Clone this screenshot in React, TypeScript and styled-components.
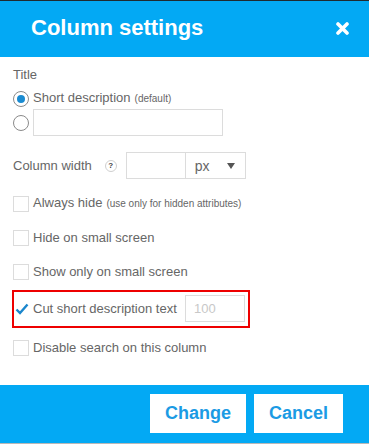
import React from "react";
import styled, { createGlobalStyle } from "styled-components";

const Global = createGlobalStyle`
  html, body { margin: 0; padding: 0; background: #fff; }
  body { font-family: "Liberation Sans", Arial, sans-serif; }
  * { box-sizing: border-box; }
`;

const Modal = styled.div`
  width: 369px;
  height: 444px;
  display: flex;
  flex-direction: column;
  border-top: 1px solid #1f2a30;
  border-bottom: 1px solid #b8b8b8;
  background: #fff;
`;

const Header = styled.div`
  height: 56px;
  flex: none;
  background: #03a9f4;
  display: flex;
  align-items: center;
  justify-content: space-between;
  padding: 0 20px 2px 31px;
`;

const Title = styled.h1`
  margin: 0;
  font-size: 22px;
  font-weight: bold;
  color: #fff;
  line-height: normal;
`;

const CloseBtn = styled.button`
  border: 0;
  background: none;
  padding: 0;
  width: 13px;
  height: 13px;
  display: flex;
  cursor: pointer;
`;

const Body = styled.div`
  flex: 1;
  padding: 10px 13px 0 13px;
  display: flex;
  flex-direction: column;
  color: #666;
  font-size: 13px;
  line-height: 16px;
`;

const Label = styled.div`
  line-height: 15px;
`;

const Row = styled.div<{ $mt: number; $gap?: number }>`
  display: flex;
  align-items: center;
  margin-top: ${(p) => p.$mt}px;
  gap: ${(p) => (p.$gap ?? 4)}px;
  min-height: 16px;
`;

const Radio = styled.span<{ $checked?: boolean }>`
  width: 16px;
  height: 16px;
  flex: none;
  border-radius: 50%;
  border: 1px solid #8a8a8a;
  background: #fff;
  display: flex;
  align-items: center;
  justify-content: center;
  &::after {
    content: "";
    display: ${(p) => (p.$checked ? "block" : "none")};
    width: 8px;
    height: 8px;
    border-radius: 50%;
    background: #1a8bd1;
  }
`;

const Small = styled.span`
  font-size: 10px;
  margin-left: 4px;
`;

const TextInput = styled.input<{ $w: number }>`
  width: ${(p) => p.$w}px;
  height: 27px;
  border: 1px solid #dcdcdc;
  font-family: inherit;
  font-size: 13px;
  color: #666;
  padding: 0 8px;
  outline: none;
  background: #fff;
  &::placeholder { color: #c8c8c8; }
`;

const Help = styled.span`
  width: 12px;
  height: 12px;
  border-radius: 50%;
  border: 1px solid #cfcfcf;
  display: flex;
  align-items: center;
  justify-content: center;
  font-size: 8px;
  font-weight: bold;
  color: #444;
  margin: 0 9px 0 13px;
  line-height: 1;
`;

const Select = styled.div`
  width: 60px;
  height: 27px;
  border: 1px solid #dcdcdc;
  border-left: 0;
  display: flex;
  align-items: center;
  justify-content: space-between;
  padding: 0 10px 0 9px;
  font-size: 14px;
  color: #666;
`;

const Arrow = styled.span`
  width: 0;
  height: 0;
  border-left: 4px solid transparent;
  border-right: 4px solid transparent;
  border-top: 6px solid #555;
`;

const Check = styled.span<{ $checked?: boolean }>`
  width: 16px;
  height: 16px;
  flex: none;
  border: ${(p) => (p.$checked ? "0" : "1px solid #dcdcdc")};
  background: #fff;
  display: flex;
  align-items: center;
  justify-content: center;
`;

const Highlight = styled.div`
  margin: 10px 0 0 -1px;
  width: 238px;
  border: 2px solid #ee0000;
  padding: 3px 3px 4px 0;
  display: flex;
  align-items: center;
  gap: 3px;
`;

const Spacer = styled.span`
  flex: 1;
`;

const Footer = styled.div`
  height: 58px;
  flex: none;
  background: #03a9f4;
  display: flex;
  justify-content: flex-end;
  align-items: flex-start;
  gap: 8px;
  padding: 9px 26px 0 0;
`;

const Button = styled.button`
  height: 39px;
  padding: 0 15px;
  border: 0;
  background: #fff;
  color: #1b9be4;
  font-family: "Liberation Sans", Arial, sans-serif;
  font-weight: bold;
  font-size: 18px;
  cursor: pointer;
`;

const CheckRow = ({ label, note, mt }: { label: string; note?: string; mt: number }) => (
  <Row $mt={mt}>
    <Check />
    <span>
      {label}
      {note && <Small>{note}</Small>}
    </span>
  </Row>
);

export default function App() {
  return (
    <>
      <Global />
      <Modal>
        <Header>
          <Title>Column settings</Title>
          <CloseBtn aria-label="close">
            <svg width="13" height="13" viewBox="0 0 13 13">
              <path d="M2 2 L11 11 M11 2 L2 11" stroke="#fff" strokeWidth="3.6" strokeLinecap="round" />
            </svg>
          </CloseBtn>
        </Header>
        <Body>
          <Label>Title</Label>
          <Row $mt={8}>
            <Radio $checked />
            <span>
              Short description<Small>(default)</Small>
            </span>
          </Row>
          <Row $mt={2}>
            <Radio />
            <TextInput $w={190} />
          </Row>
          <Row $mt={16} $gap={0}>
            <span>Column width</span>
            <Help>?</Help>
            <TextInput $w={60} />
            <Select>
              <span>px</span>
              <Arrow />
            </Select>
          </Row>
          <CheckRow mt={16} label="Always hide" note="(use only for hidden attributes)" />
          <CheckRow mt={18} label="Hide on small screen" />
          <CheckRow mt={18} label="Show only on small screen" />
          <Highlight>
            <Check $checked>
              <svg width="14" height="12" viewBox="0 0 14 12">
                <path d="M1.5 6.5 L5 10 L12.5 1.5" stroke="#1a86cc" strokeWidth="2.4" fill="none" />
              </svg>
            </Check>
            <span>Cut short description text</span>
            <Spacer />
            <TextInput $w={60} placeholder="100" />
          </Highlight>
          <CheckRow mt={12} label="Disable search on this column" />
        </Body>
        <Footer>
          <Button>Change</Button>
          <Button>Cancel</Button>
        </Footer>
      </Modal>
    </>
  );
}
